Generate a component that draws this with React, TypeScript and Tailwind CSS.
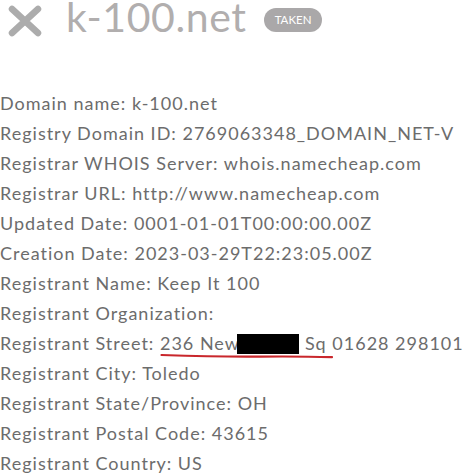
const rows: [string, string][] = [
  ['Domain name', 'k-100.net'],
  ['Registry Domain ID', '2769063348_DOMAIN_NET-V'],
  ['Registrar WHOIS Server', 'whois.namecheap.com'],
  ['Registrar URL', 'http://www.namecheap.com'],
  ['Updated Date', '0001-01-01T00:00:00.00Z'],
  ['Creation Date', '2023-03-29T22:23:05.00Z'],
  ['Registrant Name', 'Keep It 100'],
  ['Registrant Organization', ''],
];

const rowsAfter: [string, string][] = [
  ['Registrant City', 'Toledo'],
  ['Registrant State/Province', 'OH'],
  ['Registrant Postal Code', '43615'],
  ['Registrant Country', 'US'],
];

function Row({ label, value }: { label: string; value: string }) {
  return (
    <div className="h-[30px] leading-[30px] whitespace-nowrap">
      {label}: {value}
    </div>
  );
}

export default function App() {
  return (
    <div
      className="w-[467px] h-[476px] overflow-hidden bg-white text-[#6c6c6c]"
      style={{ fontFamily: 'Lato, "Open Sans", sans-serif' }}
    >
      {/* Header */}
      <div className="flex items-start h-[44px] pl-[8px]">
        <svg width="34" height="32" viewBox="0 0 34 32" className="shrink-0 mt-[5px]">
          <path d="M4 4 L30 28 M30 4 L4 28" stroke="#acacac" strokeWidth="6.5" strokeLinecap="round" />
        </svg>
        <span className="ml-[24px] text-[41px] leading-[32px] mt-[1px] text-[#b1aeae] tracking-[0.6px]">
          k-100.net
        </span>
        <span className="ml-[17px] mt-[8px] rounded-full bg-[#aaa8a9] text-white text-[11.5px] leading-[24px] h-[24px] px-[11px]">
          TAKEN
        </span>
      </div>

      {/* Whois record */}
      <div className="mt-[44px] text-[18px] tracking-[1px]">
        {rows.map(([l, v]) => (
          <Row key={l} label={l} value={v} />
        ))}
        <div className="relative h-[30px] leading-[30px] whitespace-nowrap">
          Registrant Street: 236 New
          <span className="inline-block align-middle w-[62px] h-[20px] bg-black -ml-[3px] mr-[6px] -mt-[2px]" />
          Sq 01628 298101
          {/* red pen underline */}
          <svg className="absolute left-[160px] top-[25px]" width="174" height="6" viewBox="0 0 174 6">
            <path d="M1.5 2 Q60 4 100 3.6 T172 4.2" stroke="#c9272c" strokeWidth="2.2" fill="none" strokeLinecap="round" />
          </svg>
        </div>
        {rowsAfter.map(([l, v]) => (
          <Row key={l} label={l} value={v} />
        ))}
      </div>
    </div>
  );
}
